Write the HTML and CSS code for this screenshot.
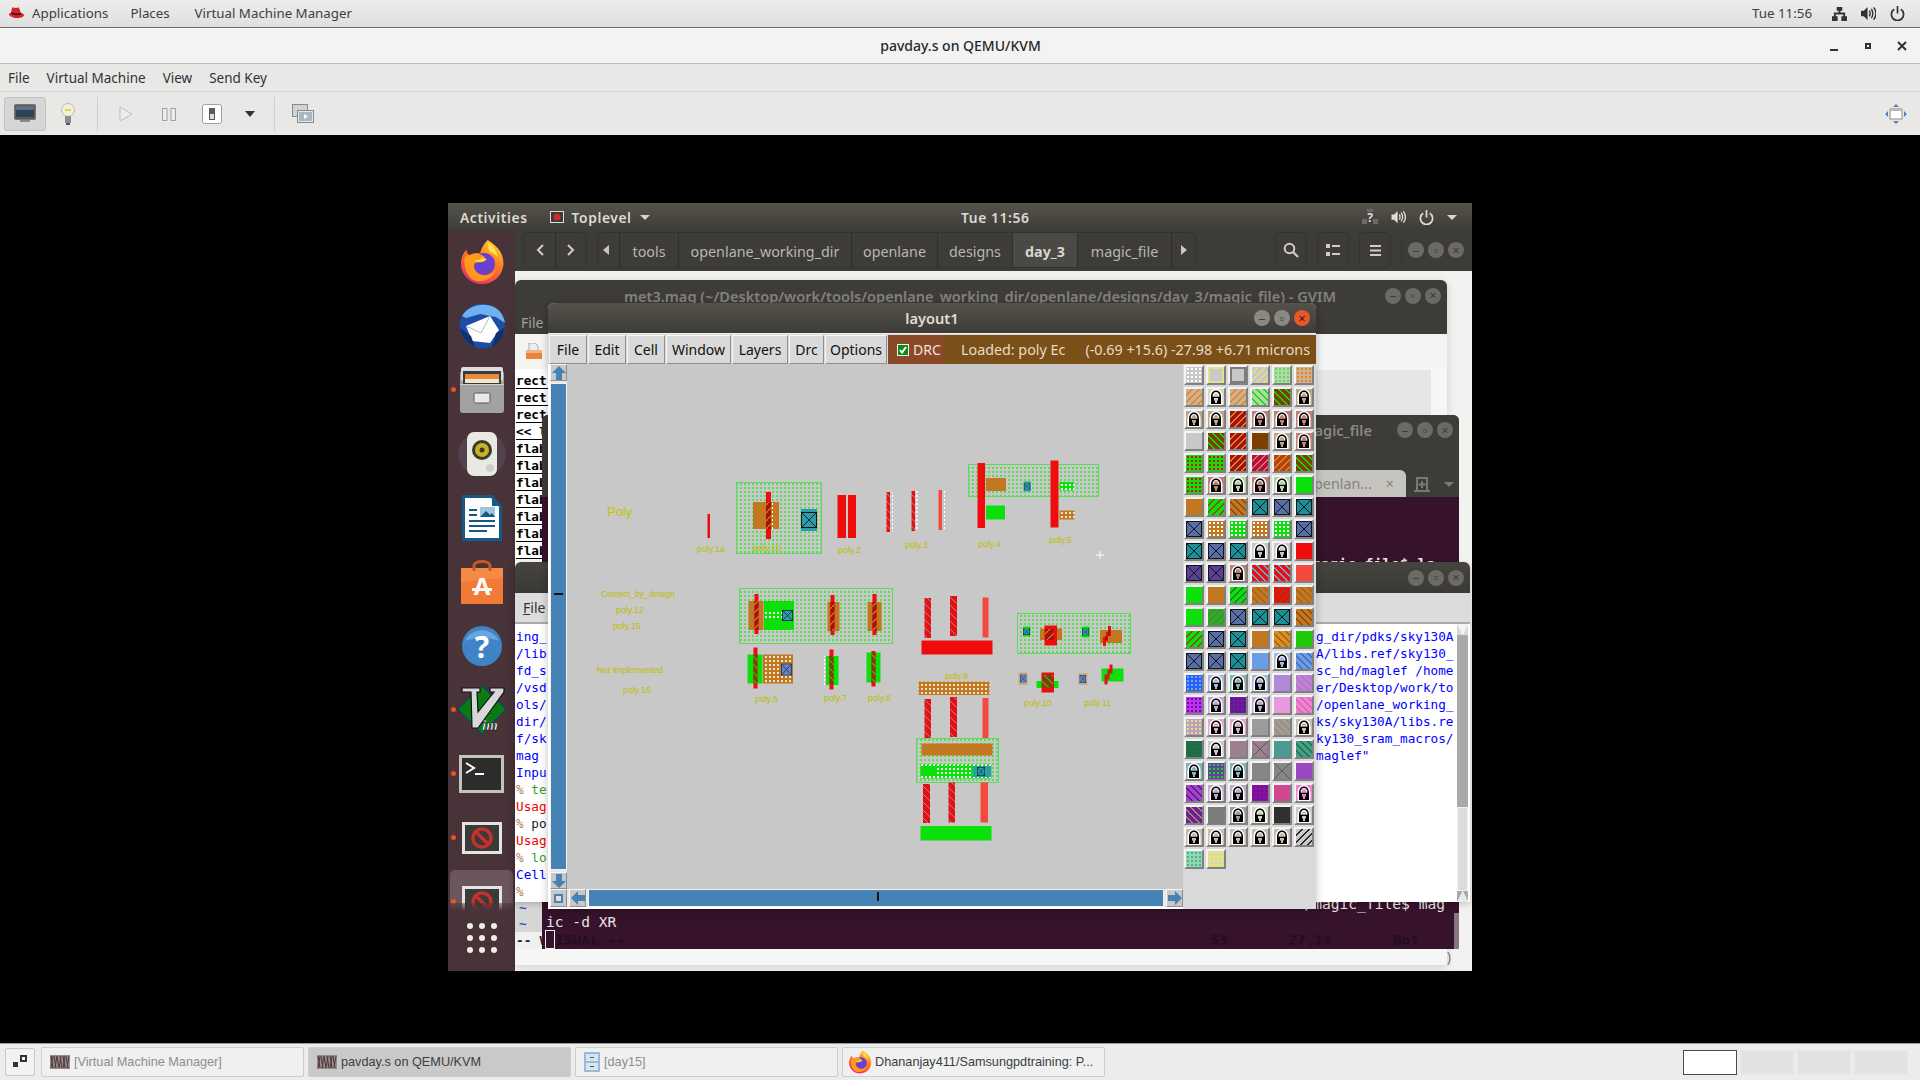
FILE: index.html
```html
<!DOCTYPE html>
<html lang="en">
<head>
    <meta charset="UTF-8">
    <title>pavday.s on QEMU/KVM</title>
    <link rel="stylesheet" href="styles.css">
</head>
<body>
<svg class="defs">
    <defs>
        <linearGradient id="ffg" x1="0.8" y1="0" x2="0.3" y2="1"><stop offset="0" stop-color="#ffd23c"/><stop offset="0.45" stop-color="#ff7a1e"/><stop offset="1" stop-color="#ee2a6e"/></linearGradient>
        <symbol id="firefox" viewBox="0 0 48 48">
            <path d="M30 1c6 4 10 7 13 12 3 5 4 11 3 16-2 11-11 18-22 18C12 47 2 37 2 26c0-6 2-11 6-15 0 3 1 5 3 6 3-2 7-3 11-2 1-5 4-10 8-14z" fill="url(#ffg)"/>
            <circle cx="26" cy="26" r="11.5" fill="#6b3fd0"/>
            <path d="M31 4c5 4 9 9 9 15-3-4-5-5-8-6-2-3-2-6-1-9z" fill="#ffe14a"/>
            <path d="M6 19c3-2 6-3 10-3 4-1 8 0 11 3-3 3-7 4-10 6-3 3-1 9 5 12 6 2 13 0 17-6-3 9-11 14-20 13C10 43 4 30 6 19z" fill="#ff9a1c"/>
            <path d="M17 22c3 0 6-1 8-3l4 2c-3 3-7 4-12 3z" fill="#ffd23c"/>
        </symbol>
        <symbol id="lock" viewBox="0 0 16 16">
            <path d="M1.5 16V8C1.5 3 4.5 0 8 0s6.5 3 6.5 8v8z" fill="#fff"/>
            <path d="M3 15V8c0-4 2-6.5 5-6.5S13 4 13 8v7z" fill="#000"/>
            <path d="M4.5 7.500c0-2.500 1.500-4.500 3.500-4.500s3.500 2 3.500 4.500z" fill="#fff"/>
            <path d="M5.500 7.500C5.500 5.500 6.500 4 8 4s2.500 1.500 2.500 3.500z" fill="currentColor"/>
            <path d="M6 9h4v2.500H9V14H7v-2.500H6z" fill="currentColor"/>
        </symbol>
        <symbol id="stopicon" viewBox="0 0 40 32">
            <rect width="40" height="32" fill="#e4e4e0"/>
            <rect x="3" y="3" width="34" height="26" fill="#3a3a38"/>
            <circle cx="20" cy="16" r="9" fill="none" stroke="#c8302c" stroke-width="3.5"/>
            <path d="M14 10l12 12" stroke="#c8302c" stroke-width="3.5"/>
        </symbol>
        <symbol id="vvv" viewBox="0 0 20 14">
            <rect width="20" height="14" fill="#8d8d8d"/>
            <path d="M1 1l2 12M4 1l2 12M7 1l2 12M10 1l2 12M13 1l2 12M16 1l2 12" stroke="#6d2525" stroke-width="1"/>
            <path d="M3 1l-2 12M7 1L5 13M11 1L9 13M15 1l-2 12M19 1l-2 12" stroke="#444" stroke-width="1"/>
        </symbol>
        <pattern id="nw" width="4" height="4" patternUnits="userSpaceOnUse"><rect width="2" height="2" fill="#5bdc5b"/></pattern>
        <pattern id="rb" width="8" height="8" patternUnits="userSpaceOnUse"><rect width="8" height="8" fill="#ee0c0c"/><path d="M0 0l8 8" stroke="#60b0d8" stroke-width="0.9"/></pattern>
        <pattern id="dr" width="8" height="8" patternUnits="userSpaceOnUse"><rect width="8" height="8" fill="#a81010"/><path d="M0 8l8-8" stroke="#d89020" stroke-width="1.1"/></pattern>
        <pattern id="dg" width="8" height="8" patternUnits="userSpaceOnUse"><rect width="8" height="8" fill="#8a3a08"/><path d="M0 0l8 8" stroke="#0be00b" stroke-width="1.1"/></pattern>
        <pattern id="od" width="4" height="4" patternUnits="userSpaceOnUse"><rect width="4" height="4" fill="#c27820"/><rect x="1" y="1" width="2" height="2" fill="#f2e2c8"/></pattern>
        <pattern id="gd" width="4" height="4" patternUnits="userSpaceOnUse"><rect width="4" height="4" fill="#0be00b"/><rect x="1" y="1" width="2" height="2" fill="#e8ffe8"/></pattern>
        <pattern id="wd" width="4" height="4" patternUnits="userSpaceOnUse"><rect width="2" height="2" fill="#fff"/></pattern>
        <symbol id="via" viewBox="0 0 16 16" preserveAspectRatio="none">
            <rect width="16" height="16" fill="#2a9cac"/>
            <rect x="0.5" y="0.5" width="15" height="15" fill="none" stroke="#111" stroke-width="1"/>
            <path d="M0 0l16 16M16 0L0 16" stroke="#111" stroke-width="0.9"/>
        </symbol>
        <symbol id="vib" viewBox="0 0 16 16" preserveAspectRatio="none">
            <rect width="16" height="16" fill="#5f86c8"/>
            <rect x="0.5" y="0.5" width="15" height="15" fill="none" stroke="#15203c" stroke-width="1"/>
            <path d="M0 0l16 16M16 0L0 16" stroke="#15203c" stroke-width="0.9"/>
        </symbol>
    </defs>
</svg>

<div class="screen">
    <header class="topbar">
        <nav class="topbar-left">
            <span class="app-menu">
                <svg class="hat" viewBox="0 0 16 12"><path d="M4 1c1-1 3 0 4 0s2-1 3 0l2 5c1 0 3 1 3 2 0 2-3 3-7 3S1 9 1 7c0-1 1-1 2-1z" fill="#d6202a"/><path d="M3 5c3 2 7 2 10 1l.4 1C10 9 5 8 3 6z" fill="#111"/></svg>
                Applications
            </span>
            <span>Places</span>
            <span>Virtual Machine Manager</span>
        </nav>
        <div class="topbar-right">
            <span class="clock">Tue 11:56</span>
            <svg class="tray net" viewBox="0 0 16 16"><path d="M5 1h6v4H9v2h5v4h2v5h-6v-5h2V9H4v2h2v5H0v-5h2V7h5V5H5z" fill="#2e3436"/></svg>
            <svg class="tray" viewBox="0 0 16 16"><path d="M0 5h3l4-4v14l-4-4H0z" fill="#2e3436"/><path d="M9 5c1 2 1 4 0 6M11 3c2 3 2 7 0 10M13.5 1.5c3 4 3 9 0 13" fill="none" stroke="#2e3436" stroke-width="1.5"/></svg>
            <svg class="tray" viewBox="0 0 16 16"><path d="M4.5 3.5a6.5 6.5 0 1 0 7 0M8 0v8" fill="none" stroke="#2e3436" stroke-width="1.8"/></svg>
        </div>
    </header>

    <div class="titlebar">
        <span class="title">pavday.s on QEMU/KVM</span>
        <span class="win-btns">
            <svg viewBox="0 0 10 10"><rect x="1" y="8" width="8" height="2" fill="#2e3436"/></svg>
            <svg viewBox="0 0 10 10"><path d="M2 2h6v6H2zM4 4v2h2V4z" fill="#2e3436" fill-rule="evenodd"/></svg>
            <svg viewBox="0 0 10 10"><path d="M1 1l8 8M9 1L1 9" stroke="#2e3436" stroke-width="2"/></svg>
        </span>
    </div>

    <nav class="menubar">
        <span>File</span><span>Virtual Machine</span><span>View</span><span>Send Key</span>
    </nav>

    <div class="toolbar">
        <span class="tool pressed">
            <svg width="22" height="20" viewBox="0 0 22 20"><rect x="0.5" y="0.5" width="21" height="15" rx="1" fill="#5b5b5b" stroke="#777"/><rect x="2" y="2" width="18" height="11" fill="#2f4258"/><path d="M2 2h18v4H2z" fill="#5b7189"/><rect x="6" y="16" width="10" height="2" fill="#888"/></svg>
        </span>
        <span class="tool">
            <svg width="16" height="22" viewBox="0 0 16 22"><circle cx="8" cy="7" r="6.5" fill="#f1f1d6" stroke="#b8b8b8"/><path d="M5 7h6" stroke="#e2d256" stroke-width="2"/><rect x="5" y="13" width="6" height="7" fill="#8c8c8c"/><rect x="6" y="20" width="4" height="2" fill="#555"/></svg>
        </span>
        <i class="tool-sep"></i>
        <span class="tool">
            <svg width="14" height="16" viewBox="0 0 14 16"><path d="M1 1l12 7-12 7z" fill="#ededed" stroke="#bdbdbd"/></svg>
        </span>
        <span class="tool">
            <svg width="14" height="13" viewBox="0 0 14 13"><path d="M.5.5H5v12H.5zM9 .5h4.500v12H9z" fill="#ededed" stroke="#9d9d9d"/></svg>
        </span>
        <span class="tool">
            <svg width="20" height="20" viewBox="0 0 20 20"><rect x="0.5" y="0.5" width="19" height="19" rx="2" fill="#fff" stroke="#a0a0a0"/><rect x="7" y="4" width="6" height="12" fill="#5a5a5a"/><rect x="8" y="10" width="4" height="5" fill="#ddd"/></svg>
        </span>
        <span class="tool small">
            <svg width="10" height="6" viewBox="0 0 10 6"><path d="M0 0h10L5 6z" fill="#2e3436"/></svg>
        </span>
        <i class="tool-sep"></i>
        <span class="tool">
            <svg width="22" height="21" viewBox="0 0 22 21"><rect x="0.5" y="0.5" width="15" height="12" fill="#cfd4d8" stroke="#8a8a8a"/><rect x="5.5" y="6.5" width="16" height="12" fill="#e3e6e8" stroke="#8a8a8a"/><rect x="7" y="8" width="13" height="9" fill="#aab6c0"/><path d="M12 10l4 2.5-4 2.500z" fill="#fff"/></svg>
        </span>
        <span class="tool fit">
            <svg width="22" height="20" viewBox="0 0 22 20"><path d="M11 0l3 3H8zM11 20l3-3H8zM0 10l3-3v6zM22 10l-3-3v6z" fill="#4f7fc0"/><rect x="5" y="5" width="12" height="10" fill="#fff" stroke="#8a8a8a"/><rect x="5" y="5" width="12" height="2" fill="#b8b8b8"/></svg>
        </span>
    </div>

    <main class="viewer">
        <div class="vm">
            <div class="guest-top">
                <div class="guest-top-left">
                    <b>Activities</b>
                    <span class="toplevel">
                        <svg width="14" height="12" viewBox="0 0 14 12"><rect x="0.5" y="0.5" width="13" height="11" fill="#3a3a38" stroke="#ddd"/><circle cx="7" cy="6" r="3.5" fill="#c8302c"/></svg>
                        <b>Toplevel</b>
                        <i class="caret"></i>
                    </span>
                </div>
                <b class="guest-clock">Tue 11:56</b>
                <div class="guest-tray">
                    <svg width="16" height="16" viewBox="0 0 16 16"><rect y="10" width="5" height="5" fill="#6a6a66"/><rect x="11" y="10" width="5" height="5" fill="#6a6a66"/><rect x="5" y="0" width="6" height="3" fill="#6a6a66"/><text x="8" y="12.500" class="help-q">?</text></svg>
                    <svg width="15" height="14" viewBox="0 0 16 16"><path d="M0 5h3l4-4v14l-4-4H0z" fill="#e0ddd6"/><path d="M9 5c1 2 1 4 0 6M11 3c2 3 2 7 0 10M13.5 1.5c3 4 3 9 0 13" fill="none" stroke="#e0ddd6" stroke-width="1.5"/></svg>
                    <svg width="15" height="15" viewBox="0 0 16 16"><path d="M4.5 3.5a6.5 6.5 0 1 0 7 0M8 0v8" fill="none" stroke="#e0ddd6" stroke-width="1.8"/></svg>
                    <i class="caret"></i>
                </div>
            </div>

            <div class="guest-body">
                <aside class="dock">
                    <div class="dock-item"><svg width="46" height="46"><use href="#firefox"/></svg></div>
                    <div class="dock-item">
                        <svg width="48" height="48" viewBox="0 0 48 48"><circle cx="24" cy="24" r="22.5" fill="#1c4ea8"/><path d="M4 14C10 4 24 0 36 5c6 3 10 9 11 16l-9-6-16-3-14 4z" fill="#6fb0ee"/><path d="M8 24L32 14l9 14-9 13-18-2z" fill="#fff"/><path d="M8 24l15 7 9-17" fill="none" stroke="#aab8d0"/><path d="M2 26c1 9 7 16 15 19l-4-11z" fill="#123070"/><path d="M46 26c0 8-5 15-12 19l4-14z" fill="#123070"/></svg>
                    </div>
                    <div class="dock-item running">
                        <svg width="44" height="46" viewBox="0 0 44 46"><rect y="4" width="44" height="42" rx="3" fill="#a2a2a0"/><rect x="1" y="0" width="42" height="14" rx="2" fill="#dcdcdc"/><rect x="3" y="4" width="38" height="13" fill="#3a3a38"/><rect x="5" y="7" width="34" height="5" fill="#e98a3c"/><rect x="5" y="12" width="34" height="4" fill="#f3e4d0"/><rect x="14" y="26" width="16" height="10" rx="1.5" fill="#e8e8e8" stroke="#5a5a5a"/><rect x="0" y="17" width="44" height="1" fill="#cfcfcd"/></svg>
                    </div>
                    <div class="dock-item">
                        <svg width="48" height="48" viewBox="0 0 48 48"><ellipse cx="24" cy="24" rx="24" ry="22" fill="#53424e"/><rect x="9" y="2" width="30" height="44" rx="7" fill="#e9e9e3"/><circle cx="24" cy="20" r="10" fill="#3a3a30"/><circle cx="24" cy="20" r="7" fill="#c8b41e"/><circle cx="24" cy="20" r="2.5" fill="#3a3a30"/><circle cx="32" cy="38" r="4" fill="#cfcfc8"/></svg>
                    </div>
                    <div class="dock-item">
                        <svg width="42" height="48" viewBox="0 0 42 48"><path d="M1 1h30l10 11v35H1z" fill="#155a86"/><path d="M4 4h26l8 9v31H4z" fill="#fff"/><path d="M31 1l10 11H31z" fill="#155a86"/><rect x="8" y="15" width="8" height="2" fill="#155a86"/><rect x="8" y="20" width="8" height="2" fill="#155a86"/><rect x="8" y="26" width="26" height="2" fill="#155a86"/><rect x="8" y="31" width="26" height="2" fill="#155a86"/><rect x="8" y="36" width="18" height="2" fill="#155a86"/><rect x="19" y="13" width="15" height="10" fill="#9fc4dc"/><path d="M19 23l6-6 4 4 2-2 3 4z" fill="#155a86"/></svg>
                    </div>
                    <div class="dock-item">
                        <svg width="42" height="44" viewBox="0 0 42 44"><path d="M0 8h42v36H0z" fill="#f07a36"/><path d="M0 8h42v10L0 22z" fill="#f58a46"/><path d="M13 11V6c0-6 16-6 16 0v5" fill="none" stroke="#c75a20" stroke-width="3"/><text x="21" y="35" class="app-a">A</text><rect x="11" y="28" width="20" height="3" fill="#fff"/></svg>
                    </div>
                    <div class="dock-item">
                        <svg width="42" height="42" viewBox="0 0 42 42"><circle cx="21" cy="21" r="20" fill="#3f84c6"/><path d="M4 16a18 16 0 0 1 34 0c-9-4-25-4-34 0z" fill="#6aa6de"/><text x="21" y="33" class="help-big">?</text></svg>
                    </div>
                    <div class="dock-item running">
                        <svg width="48" height="50" viewBox="0 0 48 50"><path d="M24 1l24 23-24 25L0 24z" fill="#0a7a14" stroke="#003a8a"/><path d="M4 3h18v4h-3l1 20L36 7h-4V3h14v4L20 43h-6l-1-36h-9z" fill="#d8d8d8" stroke="#111" stroke-width="1.2"/><text x="32" y="45" class="vim-im">im</text></svg>
                    </div>
                    <div class="dock-item running">
                        <svg width="45" height="38" viewBox="0 0 45 38"><rect width="45" height="38" fill="#c2c2be"/><rect x="3" y="3" width="39" height="32" fill="#2c2c2a"/><path d="M7 8l8 5-8 5" fill="none" stroke="#fff" stroke-width="2"/><rect x="16" y="18" width="9" height="2" fill="#fff"/></svg>
                    </div>
                    <div class="dock-item running">
                        <svg width="40" height="32"><use href="#stopicon"/></svg>
                    </div>
                    <div class="dock-item running active">
                        <svg width="40" height="32"><use href="#stopicon"/></svg>
                    </div>
                    <div class="dock-grid">
                        <i></i><i></i><i></i><i></i><i></i><i></i><i></i><i></i><i></i>
                    </div>
                </aside>

                <section class="files">
                    <div class="files-head">
                        <div class="btn-group">
                            <span class="nav-arrow"><svg width="8" height="12" viewBox="0 0 8 12"><path d="M7 1L2 6l5 5" fill="none" stroke="#cfcdc5" stroke-width="2"/></svg></span>
                            <span class="nav-arrow"><svg width="8" height="12" viewBox="0 0 8 12"><path d="M1 1l5 5-5 5" fill="none" stroke="#cfcdc5" stroke-width="2"/></svg></span>
                        </div>
                        <div class="btn-group crumbs">
                            <span class="crumb-arrow"><i class="tri-left"></i></span>
                            <span class="crumb w-tools">tools</span>
                            <span class="crumb w-working">openlane_working_dir</span>
                            <span class="crumb w-openlane">openlane</span>
                            <span class="crumb w-designs">designs</span>
                            <span class="crumb w-day current">day_3</span>
                            <span class="crumb w-magic">magic_file</span>
                            <span class="crumb-arrow"><i class="tri-right"></i></span>
                        </div>
                        <div class="head-tools">
                            <span class="head-btn"><svg width="16" height="16" viewBox="0 0 16 16"><circle cx="6.5" cy="6.5" r="4.8" fill="none" stroke="#cfcdc5" stroke-width="2"/><path d="M10 10l5 5" stroke="#cfcdc5" stroke-width="2.2"/></svg></span>
                            <span class="head-btn"><svg width="14" height="12" viewBox="0 0 14 12"><path d="M0 0h4v4H0zM6 1h8v2H6zM0 8h4v4H0zM6 9h8v2H6z" fill="#cfcdc5"/></svg></span>
                            <span class="head-btn"><svg width="11" height="11" viewBox="0 0 11 11"><path d="M0 0h11v2H0zM0 4.5h11v2H0zM0 9h11v2H0z" fill="#cfcdc5"/></svg></span>
                            <i class="head-sep"></i>
                            <span class="wm-btns dim"><i>–</i><i>▫</i><i>×</i></span>
                        </div>
                    </div>
                </section>
            </div>

            <!-- gvim, behind everything else -->
            <section class="window gvim">
                <div class="gvim-head">
                    <div class="gvim-title">
                        <b>met3.mag (~/Desktop/work/tools/openlane_working_dir/openlane/designs/day_3/magic_file) - GVIM</b>
                        <span class="wm-btns dim"><i>–</i><i>▫</i><i>×</i></span>
                    </div>
                    <div class="gvim-menu">File</div>
                </div>
                <div class="gvim-tools">
                    <svg width="16" height="16" viewBox="0 0 16 16"><path d="M3 0h6l3 3v6H3z" fill="#eee" stroke="#aaa"/><path d="M0 7h16v9H0z" fill="#e8833a"/><path d="M0 7h16v3H0z" fill="#f4b27c"/></svg>
                </div>
                <div class="gvim-panel"></div>
                <div class="gvim-text">
                    <div>rect</div><div>rect</div><div>rect</div><div>&lt;&lt; l</div>
                    <div>flab</div><div>flab</div><div>flab</div><div>flab</div><div>flab</div><div>flab</div><div>flab</div>
                </div>
                <div class="gvim-tildes"><div>~</div><div>~</div></div>
                <div class="gvim-status">-- V</div>
                <div class="gvim-foot">)</div>
            </section>

            <!-- terminal -->
            <section class="window term">
                <div class="term-title">
                    <b>~/magic_file</b>
                    <span class="wm-btns dim"><i>–</i><i>▫</i><i>×</i></span>
                </div>
                <div class="term-tabs">
                    <span class="term-tab">openlan...<em>×</em></span>
                    <svg width="16" height="15" viewBox="0 0 16 15"><path d="M3 14V1h10v13M0 14h16M8 4v7M4.5 7.5h7" fill="none" stroke="#7a7872" stroke-width="2"/></svg>
                    <i class="tab-caret"></i>
                </div>
                <div class="term-body">
                    <div class="term-ls">/magic_file$ ls</div>
                    <div class="term-tail">
                        <div class="term-cmd">/magic_file$ mag</div>
                        <div class="term-ic">ic -d XR</div>
                        <div class="term-ghost"><span class="cursor"></span><span>ISUAL --</span><em>53</em><em>27,14</em><em>Bot</em></div>
                    </div>
                </div>
            </section>

            <!-- tkcon -->
            <section class="window tkcon">
                <div class="tk-title"><span class="wm-btns dim"><i>–</i><i>▫</i><i>×</i></span></div>
                <div class="tk-menu"><span><u>F</u>ile</span></div>
                <div class="tk-body">
<pre class="tk-left"><span class="t-blue">ing_</span>
<span class="t-blue">/lib</span>
<span class="t-blue">fd_s</span>
<span class="t-blue">/vsd</span>
<span class="t-blue">ols/</span>
<span class="t-blue">dir/</span>
<span class="t-blue">f/sk</span>
<span class="t-blue">mag</span>
<span class="t-blue">Inpu</span>
<span class="t-pct">%</span> <span class="t-grn">te</span>
<span class="t-red">Usag</span>
<span class="t-pct">%</span> po
<span class="t-red">Usag</span>
<span class="t-pct">%</span> <span class="t-grn">lo</span>
<span class="t-blue">Cell</span>
<span class="t-pct">%</span></pre>
<pre class="tk-right">g_dir/pdks/sky130A
A/libs.ref/sky130_
sc_hd/maglef /home
er/Desktop/work/to
/openlane_working_
ks/sky130A/libs.re
ky130_sram_macros/
maglef"</pre>
                    <div class="tk-scroll">
                        <i class="sb-btn up"></i>
                        <i class="sb-trough"></i>
                        <i class="sb-thumb"></i>
                        <i class="sb-btn down"></i>
                    </div>
                </div>
            </section>

            <!-- magic layout window -->
            <section class="window magic">
                <div class="magic-title">
                    <b>layout1</b>
                    <span class="wm-btns live"><i>–</i><i>▫</i><i class="close">×</i></span>
                </div>
                <div class="magic-menu">
                    <span class="m-btn m-file">File</span>
                    <span class="m-btn m-edit">Edit</span>
                    <span class="m-btn m-cell">Cell</span>
                    <span class="m-btn m-window">Window</span>
                    <span class="m-btn m-layers">Layers</span>
                    <span class="m-btn m-drc">Drc</span>
                    <span class="m-btn m-options">Options</span>
                    <span class="m-check"><svg width="12" height="12" viewBox="0 0 12 12"><rect width="12" height="12" fill="#f2f2f2"/><rect x="1" y="1" width="10" height="10" fill="#0a8a14"/><path d="M3 6l2 2.500L9 3" fill="none" stroke="#fff" stroke-width="2"/></svg>DRC</span>
                    <span class="m-info"><span>Loaded: poly Ec</span><span>(-0.69 +15.6) -27.98 +6.71 microns</span></span>
                </div>
                <div class="magic-body">
                    <div class="magic-left">
                        <div class="magic-mid">
                            <div class="vscroll">
                                <span class="tk-arrow"><svg width="14" height="14" viewBox="0 0 14 14"><path d="M7 0l7 7H10v7H4V7H0z" fill="#4682b4"/></svg></span>
                                <div class="vtrack"><i class="vtick"></i></div>
                                <span class="tk-arrow"><svg width="14" height="14" viewBox="0 0 14 14"><path d="M7 14l7-7H10V0H4v7H0z" fill="#4682b4"/></svg></span>
                            </div>
                            <svg class="canvas" viewBox="567 365 616 525">
                                <text x="607" y="517" class="lbl big">Poly</text>
                                <rect x="707.5" y="515" width="2.5" height="24" fill="#ee0c0c"/>
                                <text x="697" y="553" class="lbl">poly.1a</text>

                                <!-- poly.1b -->
                                <rect x="736.5" y="483.5" width="85" height="71" fill="url(#nw)" stroke="#5bdc5b"/>
                                <rect x="753" y="503" width="26" height="27" fill="#c27820"/>
                                <rect x="766" y="493" width="5" height="47" fill="#ee0c0c"/>
                                <rect x="766" y="503" width="5" height="27" fill="url(#dr)"/>
                                <rect x="771" y="503" width="2" height="27" fill="url(#wd)"/>
                                <rect x="801" y="510" width="16" height="22" fill="#2a9cac"/>
                                <use href="#via" x="801" y="513" width="16" height="16"/>
                                <text x="753" y="552" class="lbl">poly.1b</text>

                                <!-- poly.2 -->
                                <rect x="837.5" y="496" width="8.5" height="43" fill="#ee0c0c"/>
                                <rect x="848" y="496" width="8" height="43" fill="#ee0c0c"/>
                                <rect x="846" y="496" width="2" height="43" fill="url(#wd)"/>
                                <text x="838" y="554" class="lbl">poly.2</text>

                                <!-- poly.3 -->
                                <rect x="886.5" y="493" width="3.5" height="40" fill="url(#rb)"/>
                                <rect x="891" y="493" width="2" height="40" fill="url(#wd)"/>
                                <rect x="911.5" y="492" width="3.5" height="40" fill="url(#rb)"/>
                                <rect x="915.5" y="492" width="2" height="40" fill="url(#wd)"/>
                                <rect x="938.5" y="491" width="3.5" height="40" fill="#f44a3e"/>
                                <rect x="943" y="491" width="2" height="40" fill="url(#wd)"/>
                                <text x="905" y="549" class="lbl">poly.3</text>

                                <!-- poly.4 / poly.5 -->
                                <rect x="968.5" y="465.5" width="130" height="32" fill="url(#nw)" stroke="#5bdc5b"/>
                                <rect x="977.5" y="464" width="7.5" height="65" fill="#ee0c0c"/>
                                <rect x="986" y="479" width="20" height="13" fill="#c27820"/>
                                <rect x="986" y="506.5" width="19" height="14" fill="#0be00b"/>
                                <rect x="1023.5" y="482.5" width="7.5" height="10" fill="#2a9cac"/>
                                <use href="#via" x="1024" y="484.5" width="6" height="6"/>
                                <rect x="1050.5" y="461.5" width="8" height="67" fill="#ee0c0c"/>
                                <rect x="1059.5" y="483" width="14.5" height="8.5" fill="url(#gd)"/>
                                <rect x="1059.5" y="511.5" width="15" height="9" fill="url(#od)"/>
                                <text x="978" y="548" class="lbl">poly.4</text>
                                <text x="1049" y="544" class="lbl">poly.5</text>
                                <path d="M1100 552v8M1096 556h8" stroke="#fff" stroke-width="1"/>

                                <!-- row 2 -->
                                <rect x="739.5" y="589.5" width="153" height="55" fill="url(#nw)" stroke="#5bdc5b"/>
                                <rect x="748.5" y="602" width="15" height="29" fill="#c27820"/>
                                <rect x="764" y="602" width="30" height="29" fill="#0be00b"/>
                                <rect x="764" y="611" width="18" height="10" fill="url(#gd)"/>
                                <use href="#via" x="782" y="611" width="11" height="11"/>
                                <rect x="754.5" y="595" width="4" height="40" fill="#ee0c0c"/>
                                <rect x="754.5" y="602" width="4" height="29" fill="url(#dr)"/>
                                <rect x="827.5" y="603" width="12" height="29" fill="#c27820"/>
                                <rect x="830.5" y="596" width="4" height="40" fill="#ee0c0c"/>
                                <rect x="830.5" y="603" width="4" height="29" fill="url(#dr)"/>
                                <rect x="867.5" y="603" width="14" height="29" fill="#c27820"/>
                                <rect x="872.5" y="595" width="4" height="41" fill="#ee0c0c"/>
                                <rect x="872.5" y="603" width="4" height="29" fill="url(#dr)"/>

                                <!-- poly.6 .. poly.8 -->
                                <rect x="747.5" y="655.5" width="15" height="29" fill="#0be00b"/>
                                <rect x="763" y="655.5" width="30" height="29" fill="url(#od)"/>
                                <use href="#vib" x="781" y="664.5" width="11" height="12"/>
                                <rect x="753.5" y="648.5" width="4" height="41" fill="#ee0c0c"/>
                                <rect x="753.5" y="655.5" width="4" height="29" fill="url(#dg)"/>
                                <rect x="826" y="657" width="12.5" height="29" fill="#0be00b"/>
                                <rect x="829.5" y="650.5" width="4" height="40" fill="#ee0c0c"/>
                                <rect x="829.5" y="657" width="4" height="29" fill="url(#dg)"/>
                                <rect x="824" y="657" width="1" height="29" fill="url(#wd)"/>
                                <rect x="866.5" y="653.5" width="14" height="30" fill="#0be00b"/>
                                <rect x="871.5" y="652" width="4" height="35.5" fill="#ee0c0c"/>
                                <rect x="871.5" y="653.5" width="4" height="30" fill="url(#dg)"/>
                                <text x="755" y="703" class="lbl">poly.6</text>
                                <text x="824" y="702" class="lbl">poly.7</text>
                                <text x="868" y="702" class="lbl">poly.8</text>

                                <!-- poly.9 -->
                                <rect x="924.5" y="599" width="6.5" height="40" fill="url(#rb)"/>
                                <rect x="950" y="597" width="7" height="40" fill="url(#rb)"/>
                                <rect x="982.5" y="598.5" width="6" height="40" fill="#f44a3e"/>
                                <rect x="921.5" y="641.5" width="71" height="14" fill="#ee0c0c"/>
                                <text x="945" y="680" class="lbl">poly.9</text>
                                <rect x="918.5" y="682.5" width="71" height="13.5" fill="url(#od)"/>
                                <rect x="924.5" y="700" width="6.5" height="39.5" fill="url(#rb)"/>
                                <rect x="950" y="698" width="7" height="40" fill="url(#rb)"/>
                                <rect x="982.5" y="699" width="6" height="40" fill="#f44a3e"/>
                                <rect x="916.5" y="739.5" width="82" height="44" fill="url(#nw)" stroke="#5bdc5b"/>
                                <rect x="921.5" y="744.5" width="71" height="12" fill="#c27820"/>
                                <rect x="920.5" y="765.5" width="71" height="14" fill="url(#gd)"/>
                                <rect x="920.5" y="767" width="14.5" height="8" fill="#0be00b"/>
                                <rect x="973" y="767" width="18" height="11" fill="#2a9cac"/>
                                <use href="#via" x="977" y="768" width="8" height="9"/>
                                <rect x="923" y="785" width="7" height="39" fill="url(#rb)"/>
                                <rect x="948.5" y="783.5" width="6.5" height="40" fill="url(#rb)"/>
                                <rect x="980.5" y="783.5" width="7.5" height="40" fill="#f44a3e"/>
                                <rect x="920.5" y="827" width="71" height="14.5" fill="#0be00b"/>

                                <!-- poly.10 / poly.11 -->
                                <rect x="1017.5" y="614.5" width="113" height="40" fill="url(#nw)" stroke="#5bdc5b"/>
                                <rect x="1023" y="627.5" width="7.5" height="10" fill="#0be00b"/>
                                <use href="#via" x="1023" y="629.5" width="7" height="6.5"/>
                                <rect x="1040" y="629.5" width="22" height="11.5" fill="#c27820"/>
                                <rect x="1044.5" y="626.5" width="12.5" height="20" fill="#ee0c0c"/>
                                <rect x="1045" y="630" width="8.5" height="11" fill="url(#dr)"/>
                                <rect x="1082" y="627.5" width="7.5" height="11" fill="#0be00b"/>
                                <use href="#via" x="1082" y="629.5" width="7" height="7"/>
                                <rect x="1100" y="631" width="22" height="13" fill="#c27820"/>
                                <path d="M1108 627h3v10h-3v5h-2v5h-3v-9h3v-5h2z" fill="#ee0c0c"/>
                                <path d="M1108 631h2v6h-3v4h-2v-4h3z" fill="#a81010"/>
                                <rect x="1018.5" y="673.5" width="9" height="12.5" fill="#c9a886"/>
                                <use href="#vib" x="1020" y="675.5" width="6.5" height="8"/>
                                <rect x="1036.5" y="682" width="22" height="7" fill="#0be00b"/>
                                <rect x="1041.5" y="673.5" width="12.5" height="20" fill="#ee0c0c"/>
                                <rect x="1042" y="676" width="11" height="12.5" fill="url(#dg)"/>
                                <rect x="1078.5" y="674" width="9" height="12" fill="#c9a886"/>
                                <use href="#vib" x="1079.5" y="676" width="6.5" height="8"/>
                                <rect x="1101.5" y="669.5" width="22" height="13" fill="#0be00b"/>
                                <path d="M1109.5 665.5h3v9h-3v6h-2v5h-3v-10h3v-5h2z" fill="#ee0c0c"/>
                                <path d="M1108 671h2v5h-3v4h-2v-4h3z" fill="#8a3a08"/>
                                <text x="1024" y="707" class="lbl">poly.10</text>
                                <text x="1084" y="707" class="lbl">poly.11</text>

                                <text x="601" y="598" class="lbl">Correct_by_design</text>
                                <text x="616" y="614" class="lbl">poly.12</text>
                                <text x="613" y="630" class="lbl">poly.15</text>
                                <text x="596.5" y="674" class="lbl">Not implemented</text>
                                <text x="623" y="694" class="lbl">poly.16</text>
                            </svg>
                        </div>
                        <div class="hscroll">
                            <span class="tk-arrow corner"><i></i></span>
                            <span class="tk-arrow"><svg width="14" height="14" viewBox="0 0 14 14"><path d="M0 7l7-7v4h7v6H7v4z" fill="#4682b4"/></svg></span>
                            <div class="htrack"><i class="htick"></i></div>
                            <span class="tk-arrow"><svg width="14" height="14" viewBox="0 0 14 14"><path d="M14 7L7 0v4H0v6h7v4z" fill="#4682b4"/></svg></span>
                        </div>
                    </div>
                    <div class="layers">
                        <i class="tile dots l-white"></i>
                        <i class="tile box-y"></i>
                        <i class="tile box-g"></i>
                        <i class="tile up l-yellow"></i>
                        <i class="tile lgreen dots l-green"></i>
                        <i class="tile tan dots l-orange"></i>

                        <i class="tile tan up l-orange"></i>
                        <i class="tile lgrey"><svg class="lk"><use href="#lock"/></svg></i>
                        <i class="tile tan up l-orange"></i>
                        <i class="tile lgreen dn l-lime"></i>
                        <i class="tile brown dn l-lime"></i>
                        <i class="tile khaki"><svg class="lk"><use href="#lock"/></svg></i>

                        <i class="tile khaki"><svg class="lk"><use href="#lock"/></svg></i>
                        <i class="tile khaki"><svg class="lk"><use href="#lock"/></svg></i>
                        <i class="tile dred up l-orange"></i>
                        <i class="tile rosy"><svg class="lk"><use href="#lock"/></svg></i>
                        <i class="tile rosy"><svg class="lk"><use href="#lock"/></svg></i>
                        <i class="tile rosy"><svg class="lk"><use href="#lock"/></svg></i>

                        <i class="tile"></i>
                        <i class="tile brown dn l-lime"></i>
                        <i class="tile dred up l-orange"></i>
                        <i class="tile brown"></i>
                        <i class="tile khaki"><svg class="lk"><use href="#lock"/></svg></i>
                        <i class="tile rosy"><svg class="lk"><use href="#lock"/></svg></i>

                        <i class="tile green dots l-red"></i>
                        <i class="tile green dots l-red"></i>
                        <i class="tile dred up l-orange"></i>
                        <i class="tile crimson up l-pink"></i>
                        <i class="tile rust up l-orange"></i>
                        <i class="tile brown dn l-lime"></i>

                        <i class="tile green dots l-red"></i>
                        <i class="tile rosy"><svg class="lk"><use href="#lock"/></svg></i>
                        <i class="tile lgreen"><svg class="lk"><use href="#lock"/></svg></i>
                        <i class="tile rosy"><svg class="lk"><use href="#lock"/></svg></i>
                        <i class="tile lgreen"><svg class="lk"><use href="#lock"/></svg></i>
                        <i class="tile green"></i>

                        <i class="tile orange"></i>
                        <i class="tile green up l-brown"></i>
                        <i class="tile orange dn l-brown"></i>
                        <i class="tile teal cross"></i>
                        <i class="tile blue cross"></i>
                        <i class="tile teal cross"></i>

                        <i class="tile blue cross"></i>
                        <i class="tile orange dots l-white"></i>
                        <i class="tile green dots l-white"></i>
                        <i class="tile orange dots l-white"></i>
                        <i class="tile green dots l-white"></i>
                        <i class="tile blue cross"></i>

                        <i class="tile teal cross"></i>
                        <i class="tile blue cross"></i>
                        <i class="tile teal cross"></i>
                        <i class="tile"><svg class="lk"><use href="#lock"/></svg></i>
                        <i class="tile"><svg class="lk"><use href="#lock"/></svg></i>
                        <i class="tile red"></i>

                        <i class="tile purple cross"></i>
                        <i class="tile purple cross"></i>
                        <i class="tile rosy"><svg class="lk"><use href="#lock"/></svg></i>
                        <i class="tile red dn l-sky"></i>
                        <i class="tile red dn l-sky"></i>
                        <i class="tile lred"></i>

                        <i class="tile green"></i>
                        <i class="tile orange"></i>
                        <i class="tile green up l-dgreen"></i>
                        <i class="tile orange dn l-dorange"></i>
                        <i class="tile red up l-brown"></i>
                        <i class="tile orange dn l-dorange"></i>

                        <i class="tile green"></i>
                        <i class="tile dgreen up l-green2"></i>
                        <i class="tile blue cross"></i>
                        <i class="tile teal cross"></i>
                        <i class="tile teal cross"></i>
                        <i class="tile orange dn l-brown"></i>

                        <i class="tile green up l-brown"></i>
                        <i class="tile blue cross"></i>
                        <i class="tile teal cross"></i>
                        <i class="tile orange"></i>
                        <i class="tile gold dn l-dorange"></i>
                        <i class="tile lime"></i>

                        <i class="tile blue cross"></i>
                        <i class="tile blue cross"></i>
                        <i class="tile teal cross"></i>
                        <i class="tile sky"></i>
                        <i class="tile lblue"><svg class="lk"><use href="#lock"/></svg></i>
                        <i class="tile sky dn l-blue"></i>

                        <i class="tile vblue dots l-sky"></i>
                        <i class="tile lblue"><svg class="lk"><use href="#lock"/></svg></i>
                        <i class="tile lteal"><svg class="lk"><use href="#lock"/></svg></i>
                        <i class="tile lblue"><svg class="lk"><use href="#lock"/></svg></i>
                        <i class="tile lilac"></i>
                        <i class="tile lilac dn l-rose"></i>

                        <i class="tile magenta dots l-violet"></i>
                        <i class="tile mauve"><svg class="lk"><use href="#lock"/></svg></i>
                        <i class="tile dpurple dots l-violet"></i>
                        <i class="tile mauve"><svg class="lk"><use href="#lock"/></svg></i>
                        <i class="tile pink"></i>
                        <i class="tile hpink dn l-rose"></i>

                        <i class="tile plum dots l-yellow"></i>
                        <i class="tile lpink"><svg class="lk"><use href="#lock"/></svg></i>
                        <i class="tile lpink"><svg class="lk"><use href="#lock"/></svg></i>
                        <i class="tile gry"></i>
                        <i class="tile gry dn l-tan"></i>
                        <i class="tile beige"><svg class="lk"><use href="#lock"/></svg></i>

                        <i class="tile mesh dots l-dgreen"></i>
                        <i class="tile"><svg class="lk"><use href="#lock"/></svg></i>
                        <i class="tile rmauve"></i>
                        <i class="tile rmauve cross-soft"></i>
                        <i class="tile tl"></i>
                        <i class="tile tl dn l-dgreen"></i>

                        <i class="tile lteal"><svg class="lk"><use href="#lock"/></svg></i>
                        <i class="tile purple2 dots l-lime"></i>
                        <i class="tile lteal"><svg class="lk"><use href="#lock"/></svg></i>
                        <i class="tile mgrey"></i>
                        <i class="tile mgrey cross-soft"></i>
                        <i class="tile vio"></i>

                        <i class="tile vio dn l-violet"></i>
                        <i class="tile mauve"><svg class="lk"><use href="#lock"/></svg></i>
                        <i class="tile mauve"><svg class="lk"><use href="#lock"/></svg></i>
                        <i class="tile mag dots l-violet"></i>
                        <i class="tile rose"></i>
                        <i class="tile hpink"><svg class="lk"><use href="#lock"/></svg></i>

                        <i class="tile dpurple dn l-tan"></i>
                        <i class="tile dk"></i>
                        <i class="tile gry"><svg class="lk"><use href="#lock"/></svg></i>
                        <i class="tile lgrey"><svg class="lk"><use href="#lock"/></svg></i>
                        <i class="tile black"></i>
                        <i class="tile"><svg class="lk"><use href="#lock"/></svg></i>

                        <i class="tile beige"><svg class="lk"><use href="#lock"/></svg></i>
                        <i class="tile beige"><svg class="lk"><use href="#lock"/></svg></i>
                        <i class="tile beige"><svg class="lk"><use href="#lock"/></svg></i>
                        <i class="tile beige"><svg class="lk"><use href="#lock"/></svg></i>
                        <i class="tile beige"><svg class="lk"><use href="#lock"/></svg></i>
                        <i class="tile up l-black"></i>

                        <i class="tile mint dots l-teal"></i>
                        <i class="tile lyellow dots l-yellow2"></i>
                    </div>
                </div>
            </section>
        </div>
    </main>

    <footer class="taskbar">
        <span class="show-desktop"><svg width="14" height="14" viewBox="0 0 14 14"><path d="M7 0h7v7H7zM9 2v3h3V2zM0 7h5v5H0zM5 8h3" fill="#2e3436" fill-rule="evenodd"/></svg></span>
        <div class="task dim-task"><svg width="20" height="14"><use href="#vvv"/></svg>[Virtual Machine Manager]</div>
        <div class="task current-task"><svg width="20" height="14"><use href="#vvv"/></svg>pavday.s on QEMU/KVM</div>
        <div class="task dim-task"><svg width="16" height="20" viewBox="0 0 16 20"><rect width="16" height="20" rx="1" fill="#9db8d8"/><rect x="2" y="2" width="12" height="7" fill="#d8e4f0"/><rect x="2" y="11" width="12" height="7" fill="#d8e4f0"/><rect x="6" y="5" width="4" height="1" fill="#555"/><rect x="6" y="14" width="4" height="1" fill="#555"/></svg>[day15]</div>
        <div class="task fox-task"><svg width="24" height="24"><use href="#firefox"/></svg>Dhananjay411/Samsungpdtraining: P...</div>
        <div class="pager">
            <i class="on"></i><i></i><i></i><i></i>
        </div>
    </footer>
</div>
</body>
</html>
```

FILE: styles.css
```css
* {
    box-sizing: border-box;
}
html, body {
    margin: 0;
    height: 100%;
    overflow: hidden;
}
body {
    font-family: "Noto Sans", sans-serif;
    font-size: 13.3px;
    color: #2e3436;
    background: #000;
}
i, em {
    font-style: normal;
}
.defs {
    display: block;
    width: 0;
    height: 0;
}
.screen {
    display: flex;
    flex-direction: column;
    height: 1080px;
}

/* host desktop */
.topbar {
    flex: 0 0 28px;
    display: flex;
    justify-content: space-between;
    align-items: center;
    padding: 0 15px 1px 8px;
    background: linear-gradient(#ededed, #dfdfdf);
    border-bottom: 1px solid #6b6b6b;
    color: #3a3f41;
}
.topbar-left {
    display: flex;
    gap: 22px;
}
.topbar-left span:last-child {
    margin-left: 3px;
}
.app-menu {
    display: flex;
    align-items: center;
    gap: 8px;
}
.hat {
    width: 16px;
    height: 12px;
}
.topbar-right {
    display: flex;
    align-items: center;
    gap: 14px;
}
.clock {
    margin-right: 6px;
}
.tray {
    width: 15px;
    height: 15px;
}
.titlebar {
    flex: 0 0 36px;
    display: flex;
    align-items: center;
    padding-left: 92px;
    background: #f3f3f3;
    border-top: 1px solid #fff;
    border-bottom: 1px solid #bdbdbd;
}
.title {
    flex: 1;
    margin-top: -2px;
    text-align: center;
    font-size: 14px;
    font-weight: 500;
    color: #26292b;
}
.win-btns {
    display: flex;
    gap: 24px;
    padding-right: 13px;
}
.win-btns svg {
    width: 10px;
    height: 10px;
}
.menubar {
    flex: 0 0 28px;
    display: flex;
    align-items: center;
    gap: 17px;
    padding: 1px 0 0 8px;
    background: #e8e8e7;
    border-bottom: 1px solid #d4d4d3;
    font-size: 13.5px;
}
.toolbar {
    flex: 0 0 43px;
    display: flex;
    align-items: center;
    padding: 1px 0 0 4px;
    background: #e8e8e7;
}
.tool {
    display: flex;
    align-items: center;
    justify-content: center;
    width: 43px;
    height: 34px;
}
.tool.pressed {
    width: 42px;
    background: #d6d6d5;
    border: 1px solid #c2c2c1;
    border-radius: 3px;
}
.tool.small {
    width: 33px;
}
.tool.fit {
    margin-left: auto;
    margin-right: 3px;
}
.tool-sep {
    width: 1px;
    height: 34px;
    margin: 0 6px 0 8px;
    background: #cfcfce;
}
.viewer {
    flex: 1;
    padding-top: 68px;
    background: #000;
}
.taskbar {
    flex: 0 0 37px;
    display: flex;
    align-items: center;
    gap: 4px;
    padding: 0 12px 0 5px;
    background: #ececec;
    border-top: 1px solid #9a9a9a;
    font-family: "Liberation Sans", sans-serif;
    font-size: 12.7px;
    color: #3a3f41;
}
.show-desktop {
    display: flex;
    align-items: center;
    justify-content: center;
    width: 30px;
    height: 28px;
    margin-right: 2px;
    background: #f2f2f2;
    border: 1px solid #c8c8c8;
    border-radius: 2px;
}
.task {
    display: flex;
    align-items: center;
    gap: 4px;
    width: 263px;
    height: 30px;
    padding-left: 8px;
    background: #f0f0f0;
    border: 1px solid #cdcdcd;
    border-radius: 2px;
}
.fox-task {
    gap: 3px;
    padding-left: 5px;
}
.dim-task {
    color: #8b8e8f;
}
.current-task {
    background: #c9c9c9;
}
.pager {
    margin-left: auto;
    display: flex;
    gap: 3px;
}
.pager i {
    width: 54px;
    height: 25px;
    background: #e2e2e2;
    border: 1px solid #e8e8e8;
}
.pager .on {
    background: #fff;
    border: 1px solid #4a4a4a;
}

/* guest: ubuntu inside the vm */
.vm {
    position: relative;
    width: 1024px;
    height: 768px;
    margin: 0 auto;
    overflow: hidden;
    background: #f2f2f0;
}
.guest-top {
    display: grid;
    grid-template-columns: 513px 1fr auto;
    align-items: center;
    height: 27px;
    padding: 1px 15px 0 0;
    background: linear-gradient(#56534c, #3d3c37);
    color: #dfdbd2;
    font-size: 13.8px;
}
.guest-top-left {
    display: flex;
    align-items: center;
    gap: 22px;
    padding-left: 12px;
}
.guest-top b {
    font-weight: 600;
    letter-spacing: 0.6px;
}
.toplevel {
    display: flex;
    align-items: center;
    gap: 8px;
}
.caret {
    width: 0;
    height: 0;
    border: 5px solid transparent;
    border-top-color: #d8d4cb;
    border-bottom: 0;
}
.guest-tray {
    display: flex;
    align-items: center;
    gap: 13px;
}
.help-q {
    font: bold 12px "Noto Sans", sans-serif;
    fill: #e0ddd6;
    text-anchor: middle;
}
.guest-body {
    display: flex;
    height: 741px;
}
.dock {
    position: relative;
    flex: 0 0 67px;
    background: #483339;
}
.dock-item {
    position: relative;
    display: flex;
    align-items: center;
    justify-content: center;
    height: 64px;
}
.dock-item.running::before {
    content: "";
    position: absolute;
    left: 3px;
    top: 29px;
    width: 5px;
    height: 5px;
    border-radius: 50%;
    background: #e95420;
}
.dock-item.active {
    margin: 0 2px;
    border-radius: 5px 5px 0 0;
    background: #6a565c;
}
.dock-item.active::before {
    left: 1px;
}
.dock-grid {
    position: absolute;
    left: 0;
    right: 0;
    bottom: 0;
    height: 68px;
    display: grid;
    grid-template-columns: repeat(3, 6px);
    gap: 6px;
    justify-content: center;
    align-content: center;
    padding-top: 2px;
    background: linear-gradient(rgba(72, 51, 57, 0.45), #483339 8px);
}
.dock-grid i {
    width: 6px;
    height: 6px;
    border-radius: 50%;
    background: #f0eeea;
}
.files {
    flex: 1;
}
.files-head {
    display: flex;
    align-items: center;
    gap: 10px;
    height: 41px;
    padding: 2px 8px 3px;
    background: #3d3c38;
    color: #b9b7af;
    font-size: 14.3px;
}
.btn-group {
    display: flex;
    align-items: stretch;
    height: 36px;
    border: 1px solid #34332f;
    border-radius: 5px;
}
.nav-arrow {
    display: flex;
    align-items: center;
    justify-content: center;
    width: 31px;
}
.nav-arrow + .nav-arrow {
    border-left: 1px solid #2f2e2b;
}
.crumb-arrow {
    display: flex;
    align-items: center;
    justify-content: center;
    width: 21px;
}
.crumb-arrow:last-child {
    width: 24px;
    border-left: 1px solid #2f2e2b;
}
.crumb {
    display: flex;
    align-items: center;
    justify-content: center;
    padding-top: 2px;
    border-left: 1px solid #2f2e2b;
}
.w-tools { width: 59px; }
.w-working { width: 173px; }
.w-openlane { width: 86px; }
.w-designs { width: 75px; }
.w-day { width: 65px; }
.w-magic { width: 94px; }
.current {
    background: #4a4944;
    color: #d8d6ce;
    font-weight: 700;
}
.tri-left, .tri-right {
    width: 0;
    height: 0;
    border: 5px solid transparent;
}
.tri-left {
    margin-right: 6px;
    border-left: 0;
    border-right: 6px solid #c9c7bf;
}
.tri-right {
    border-right: 0;
    border-left: 6px solid #c9c7bf;
}
.head-tools {
    display: flex;
    align-items: center;
    gap: 10px;
    margin-left: auto;
}
.head-btn {
    display: flex;
    align-items: center;
    justify-content: center;
    width: 32px;
    height: 36px;
    border: 1px solid #34332f;
    border-radius: 5px;
}
.head-sep {
    width: 1px;
    height: 28px;
    margin: 0 -4px 0 0;
    background: #34332f;
}
.wm-btns {
    display: flex;
    gap: 4px;
}
.wm-btns i {
    display: flex;
    align-items: center;
    justify-content: center;
    width: 16px;
    height: 16px;
    border-radius: 50%;
    background: #6c6a65;
    color: #3d3c38;
    font-size: 13px;
    line-height: 1;
}
.wm-btns.live i {
    background: #8a8882;
    color: #3a3a37;
}
.wm-btns .close {
    background: #e9582c !important;
    color: #3a1a0e !important;
}

/* windows stacked on the guest desktop */
.window {
    position: absolute;
    display: flex;
    flex-direction: column;
}
.gvim {
    left: 67px;
    top: 77px;
    width: 932px;
    height: 685px;
    background: #f6f6f4;
    border-radius: 6px 6px 0 0;
    box-shadow: 0 2px 8px rgba(0, 0, 0, 0.15);
}
.gvim-head {
    height: 54px;
    background: #3d3c38;
    border-radius: 6px 6px 0 0;
}
.gvim-title {
    display: flex;
    align-items: center;
    justify-content: space-between;
    height: 31px;
    padding: 0 6px 0 109px;
    color: #84827b;
    font-size: 14.6px;
}
.gvim-title b {
    font-weight: 600;
}
.gvim-menu {
    padding: 2px 6px 0;
    color: #a2a099;
    font-size: 14px;
}
.gvim-tools {
    height: 35px;
    padding: 9px 11px;
    background: #f4f4f2;
}
.gvim-panel {
    position: absolute;
    left: 798px;
    right: 16px;
    top: 90px;
    height: 60px;
    background: #e6e6e6;
}
.gvim-text {
    width: 60px;
    padding: 3px 0 0 1px;
    background: #fff;
    font: bold 12.7px/17px "DejaVu Sans Mono", monospace;
    color: #000;
}
.gvim-text div {
    height: 17px;
    border-bottom: 1px solid #000;
    white-space: pre;
}
.gvim-tildes {
    margin-top: auto;
    height: 33px;
    padding: 1px 0 0 4px;
    background: #d6d6d6;
    color: #2b4fd8;
    font: bold 13px/16px "DejaVu Sans Mono", monospace;
}
.gvim-status {
    height: 17px;
    padding-left: 1px;
    background: #f0f0ee;
    font: bold 12.7px/17px "DejaVu Sans Mono", monospace;
    color: #222;
}
.gvim-foot {
    height: 16px;
    margin-right: -4px;
    text-align: right;
    color: #777;
    font-size: 14px;
    line-height: 16px;
}
.term {
    left: 94px;
    top: 212px;
    width: 917px;
    height: 534px;
    border-radius: 6px 6px 0 0;
    background: #36122c;
}
.term-title {
    display: flex;
    align-items: center;
    justify-content: flex-end;
    gap: 25px;
    height: 30px;
    padding: 0 6px;
    background: #3d3c38;
    border-radius: 6px 6px 0 0;
    color: #8a8880;
    font-size: 14.6px;
}
.term-title b {
    font-weight: 600;
}
.term-tabs {
    display: flex;
    align-items: flex-end;
    justify-content: flex-end;
    gap: 8px;
    height: 52px;
    padding: 0 5px 5px 0;
    background: #3d3c38;
}
.term-tab {
    display: flex;
    align-items: center;
    justify-content: flex-end;
    gap: 14px;
    align-self: flex-end;
    width: 200px;
    height: 27px;
    margin-bottom: -5px;
    padding-right: 12px;
    background: #c6c4be;
    border-radius: 6px 6px 0 0;
    color: #85837c;
    font-size: 14.3px;
}
.tab-caret {
    width: 0;
    height: 0;
    margin-left: 6px;
    margin-bottom: 5px;
    border: 5px solid transparent;
    border-top-color: #7a7872;
    border-bottom: 0;
}
.term-body {
    flex: 1;
    display: flex;
    flex-direction: column;
    font: 14.6px/18px "DejaVu Sans Mono", monospace;
    color: #e8e4e0;
}
.term-ls {
    margin-top: 58px;
    padding-right: 24px;
    text-align: right;
    font-weight: 700;
}
.term-tail {
    margin-top: auto;
}
.term-cmd {
    padding-right: 14px;
    text-align: right;
}
.term-ic {
    padding-left: 4px;
    border-right: 5px solid #86767f;
}
.term-ghost {
    position: relative;
    display: flex;
    align-items: center;
    height: 18px;
    padding-left: 13px;
    border-right: 5px solid #86767f;
    color: #250d20;
    font-weight: 700;
}
.cursor {
    position: absolute;
    left: 3px;
    top: -1px;
    width: 10px;
    height: 19px;
    border: 1px solid #f0f0f0;
}
.term-ghost em {
    margin-left: 585px;
}
.term-ghost em + em {
    margin-left: 60px;
}
.term-ghost em:last-child {
    margin-left: 61px;
}
.tkcon {
    left: 67px;
    top: 359px;
    width: 955px;
    height: 340px;
    border-radius: 6px 6px 0 0;
    background: #fff;
    box-shadow: 0 2px 6px rgba(0, 0, 0, 0.2);
}
.tk-title {
    display: flex;
    align-items: center;
    justify-content: flex-end;
    height: 31px;
    padding-right: 6px;
    background: linear-gradient(#45443f, #3a3935);
    border-radius: 6px 6px 0 0;
}
.tk-menu {
    display: flex;
    align-items: center;
    height: 31px;
    padding-left: 8px;
    background: #dcdcdc;
    border-bottom: 2px solid #aaa;
    font-size: 14px;
}
.tk-body {
    flex: 1;
    display: flex;
    min-height: 0;
    padding: 4px 2px 0 1px;
    font: 12.7px/17px "DejaVu Sans Mono", monospace;
}
.tk-body pre {
    margin: 0;
    font: inherit;
}
.tk-left {
    color: #222;
}
.tk-right {
    margin-left: auto !important;
    margin-right: 3px !important;
    width: 138px;
    color: #0000ff;
}
.t-blue { color: #0000ff; }
.t-red { color: #f00000; }
.t-grn { color: #3f9a1c; }
.t-pct { color: #b57a5c; }
.tk-scroll {
    flex: 0 0 11px;
    display: flex;
    flex-direction: column;
    margin-top: -4px;
    background: #a9a9a9;
}
.sb-btn {
    height: 11px;
    background: #d9d9d9;
}
.sb-trough {
    flex: 1;
}
.sb-thumb {
    height: 84px;
    background: #dcdcdc;
    border: 1px solid #f2f2f2;
}
.sb-btn.up {
    background: linear-gradient(to top right, #d9d9d9 50%, transparent 50%) left / 50% 100% no-repeat, linear-gradient(to top left, #d9d9d9 50%, transparent 50%) right / 50% 100% no-repeat, #f4f4f4;
}
.sb-btn.down {
    background: linear-gradient(to bottom right, #aaa 50%, transparent 50%) left / 50% 100% no-repeat, linear-gradient(to bottom left, #aaa 50%, transparent 50%) right / 50% 100% no-repeat, #e8e8e8;
}

/* magic */
.magic {
    left: 100px;
    top: 100px;
    width: 768px;
    height: 606px;
    background: #d9d9d9;
    border-radius: 6px 6px 0 0;
    box-shadow: 0 2px 8px rgba(0, 0, 0, 0.25);
}
.magic-title {
    position: relative;
    flex: 0 0 30px;
    display: flex;
    align-items: center;
    justify-content: flex-end;
    padding-right: 6px;
    background: linear-gradient(#55524b, #3d3c38);
    border-radius: 6px 6px 0 0;
    color: #e0ddd5;
    font-size: 14.6px;
}
.magic-title b {
    position: absolute;
    left: 0;
    right: 0;
    text-align: center;
    font-weight: 600;
}
.magic-menu {
    flex: 0 0 31px;
    display: flex;
    align-items: stretch;
    padding-top: 1px;
    background: #d9d9d9;
    border-top: 1px solid #eee;
    color: #111;
    font-size: 14px;
}
.m-btn {
    display: flex;
    align-items: center;
    justify-content: center;
    margin-right: 1px;
    background: #d9d9d9;
    border: 1px solid;
    border-color: #f6f6f6 #8e8e8e #8e8e8e #f6f6f6;
}
.m-file { width: 38px; margin-left: 1px; }
.m-edit { width: 38px; }
.m-cell { width: 38px; }
.m-window { width: 65px; }
.m-layers { width: 56px; }
.m-drc { width: 35px; }
.m-options { width: 62px; }
.m-check {
    display: flex;
    align-items: center;
    gap: 4px;
    width: 56px;
    padding-left: 9px;
    background: #8a4a28;
    color: #f2e4d8;
}
.m-info {
    flex: 1;
    display: flex;
    align-items: center;
    justify-content: space-between;
    padding: 0 6px 0 17px;
    background: #7a5018;
    color: #e8dcc8;
    font-size: 14.3px;
    white-space: nowrap;
}
.magic-body {
    flex: 1;
    display: flex;
    min-height: 0;
}
.magic-left {
    flex: 0 0 635px;
    display: flex;
    flex-direction: column;
    padding-left: 2px;
    background: #fff;
}
.magic-mid {
    flex: 0 0 525px;
    display: flex;
    background: #c8c8c8;
}
.vscroll {
    flex: 0 0 17px;
    display: flex;
    flex-direction: column;
    gap: 2px;
    background: #e8e8e8;
}
.tk-arrow {
    flex: 0 0 17px;
    display: flex;
    align-items: center;
    justify-content: center;
    width: 17px;
    background: #c8c8c8;
    border: 1px solid;
    border-color: #f6f6f6 #8e8e8e #8e8e8e #f6f6f6;
}
.vtrack {
    position: relative;
    flex: 1;
    background: #4682b4;
    border: 1px solid #f2f2f2;
}
.vtick {
    position: absolute;
    left: 3px;
    top: 209px;
    width: 9px;
    height: 2px;
    background: #111;
}
.canvas {
    flex: 1;
    display: block;
    width: 616px;
    height: 525px;
    background: #c8c8c8;
}
.lbl {
    font: 8.8px "Liberation Sans", sans-serif;
    fill: #bdbd00;
}
.lbl.big {
    font-size: 13px;
    fill: #c4c400;
}
.hscroll {
    flex: 0 0 18px;
    display: flex;
    gap: 2px;
    background: #e8e8e8;
}
.hscroll .tk-arrow {
    flex: 0 0 17px;
}
.corner i {
    width: 9px;
    height: 9px;
    border: 2px solid #4682b4;
    background: #e0e0e0;
}
.htrack {
    position: relative;
    flex: 1;
    background: #4682b4;
    border: 1px solid #f2f2f2;
}
.htick {
    position: absolute;
    left: 288px;
    top: 2px;
    width: 2px;
    height: 9px;
    background: #111;
}
.layers {
    flex: 1;
    display: grid;
    grid-template-columns: repeat(6, 22px);
    grid-auto-rows: 22px;
    padding: 1px 0 0 1px;
    background: #d9d9d9;
}

/* layer tiles */
.tile {
    display: block;
    width: 20px;
    height: 20px;
    border: 2px solid;
    border-color: #f4f4f4 #808080 #808080 #f4f4f4;
    background-color: var(--c, #c8c8c8);
    color: var(--c, #c8c8c8);
}
.lk {
    display: block;
    width: 16px;
    height: 16px;
}
.up {
    background-image: repeating-linear-gradient(135deg, transparent 0 4px, var(--l) 4px 5px);
}
.dn {
    background-image: repeating-linear-gradient(45deg, transparent 0 4px, var(--l) 4px 5px);
}
.dots {
    background-image: radial-gradient(var(--l) 1.2px, transparent 1.5px);
    background-size: 4px 4px;
}
.cross {
    background-image: linear-gradient(45deg, transparent 47%, #10161c 47% 53%, transparent 53%), linear-gradient(-45deg, transparent 47%, #10161c 47% 53%, transparent 53%);
    box-shadow: inset 0 0 0 1px #10161c;
}
.cross-soft {
    background-image: linear-gradient(45deg, transparent 47%, #5a5a5a 47% 53%, transparent 53%), linear-gradient(-45deg, transparent 47%, #5a5a5a 47% 53%, transparent 53%);
}
.box-y {
    box-shadow: inset 0 0 0 2px #e6e08a;
}
.box-g {
    box-shadow: inset 0 0 0 2px #7c7c7c;
}
.tan { --c: #d0b090; }
.lgreen { --c: #b4d8a4; }
.lgrey { --c: #d4d4c0; }
.khaki { --c: #bca888; }
.rosy { --c: #c08078; }
.brown { --c: #7d3f00; }
.dred { --c: #a51010; }
.crimson { --c: #b5102c; }
.rust { --c: #b8420c; }
.green { --c: #0be00b; }
.orange { --c: #c27820; }
.teal { --c: #1a8f96; }
.blue { --c: #5a6ea6; }
.purple { --c: #5d3f98; }
.purple2 { --c: #6040a0; }
.red { --c: #ee0c0c; }
.lred { --c: #f44a3e; }
.gold { --c: #d98f1e; }
.lime { --c: #20c80c; }
.dgreen { --c: #35a82a; }
.sky { --c: #6a9ce8; }
.lblue { --c: #a8b8e0; }
.lteal { --c: #80b8b8; }
.vblue { --c: #2d5cff; }
.lilac { --c: #b088dc; }
.magenta { --c: #c030f0; }
.dpurple { --c: #6a1e9c; }
.pink { --c: #e898dc; }
.hpink { --c: #f080d0; }
.lpink { --c: #e0a8d0; }
.mauve { --c: #c0a8d0; }
.plum { --c: #b8a0c0; }
.gry { --c: #9c9c9c; }
.beige { --c: #c8bcac; }
.mesh { --c: #1e6a4a; }
.rmauve { --c: #9c8090; }
.tl { --c: #4a9a94; }
.mgrey { --c: #868686; }
.vio { --c: #9c48c0; }
.mag { --c: #8c0fa0; }
.rose { --c: #d04890; }
.dk { --c: #7c7c7c; }
.black { --c: #303030; }
.mint { --c: #90d8b0; }
.lyellow { --c: #d8d8a8; }
.l-white { --l: #fff; }
.l-yellow { --l: #e8e070; }
.l-yellow2 { --l: #f2ec50; }
.l-green { --l: #60dc60; }
.l-lime { --l: #0be00b; }
.l-orange { --l: #d88a28; }
.l-red { --l: #e00c0c; }
.l-pink { --l: #e06888; }
.l-brown { --l: #8a4a10; }
.l-dorange { --l: #a8601a; }
.l-sky { --l: #60b0e0; }
.l-dgreen { --l: #1e7a2a; }
.l-green2 { --l: #2a9a2a; }
.l-blue { --l: #4a6ab8; }
.l-rose { --l: #d068b0; }
.l-violet { --l: #6a0ea0; }
.l-tan { --l: #a88a60; }
.l-teal { --l: #50b090; }
.l-black { --l: #222; }

/* dock glyphs */
.app-a {
    font: bold 24px "Noto Sans", sans-serif;
    fill: #fff;
    text-anchor: middle;
}
.help-big {
    font: bold 30px "Noto Sans", sans-serif;
    fill: #fff;
    text-anchor: middle;
}
.vim-im {
    font: italic bold 15px "Liberation Serif", serif;
    fill: #fff;
    stroke: #111;
    stroke-width: 0.5px;
    text-anchor: middle;
}
```
